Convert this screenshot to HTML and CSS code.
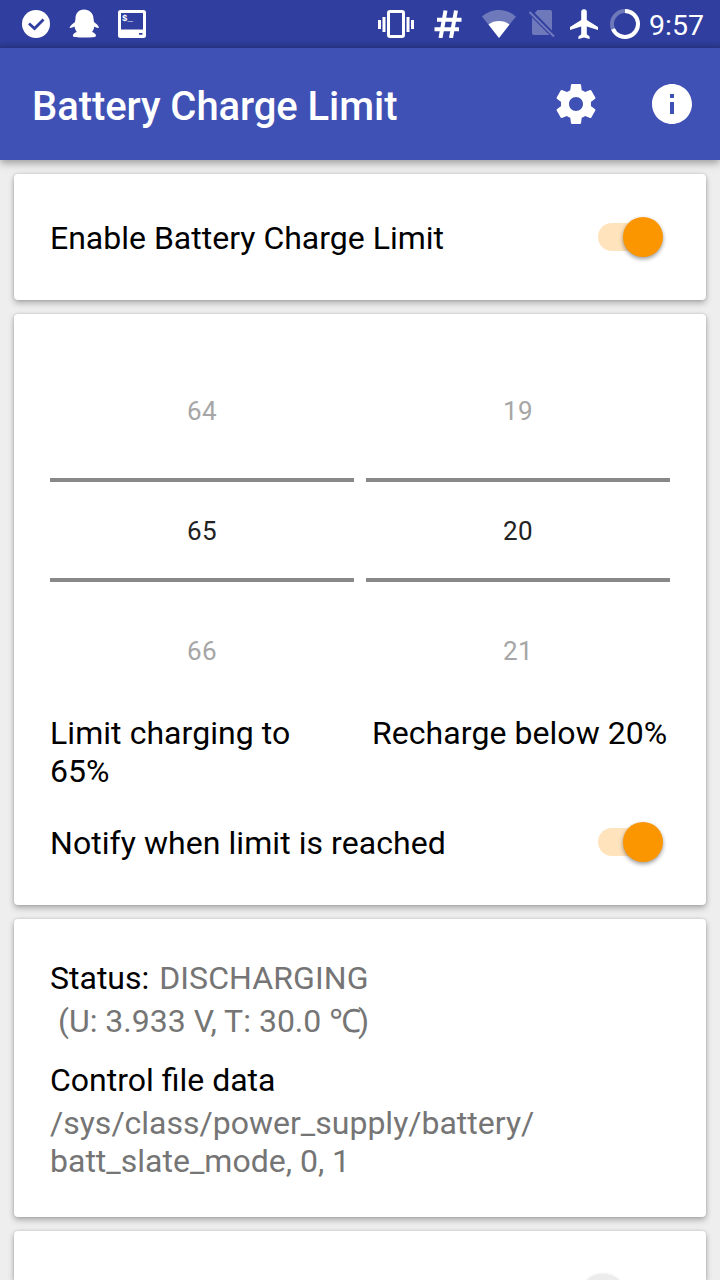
FILE: index.html
```html
<!DOCTYPE html>
<html lang="en">
<head>
  <meta charset="UTF-8">
  <meta name="viewport" content="width=device-width, initial-scale=1.0">
  <title>Battery Charge Limit</title>
  <link rel="stylesheet" href="styles.css">
</head>
<body>
  <div class="status-bar">
    <div class="notifications">
      <svg width="28" height="28" viewBox="0 0 28 28">
        <circle cx="14" cy="14" r="14" fill="#fff"/>
        <path d="M7 13.500l5.500 5 9-9" fill="none" stroke="#303f9f" stroke-width="2.800"/>
      </svg>
      <svg class="penguin" width="30" height="30" viewBox="0 0 30 30" fill="#fff">
        <path d="M15 .5C9.500.5 6.500 4.500 6.500 9.500L6 13C4 14.500 1.500 16.500 .5 18.500c.3 1 3 0 5-1 .3 2 1.200 4 2.300 5.500-2 .5-4 2-4 3.800C4 28.500 8 28.500 15.500 28.500s11.500 0 11.500-1.700c0-1.800-2-3.300-4-3.800 1.300-1.500 2-3.500 2.300-5.500 1.500 1 4 2 4.700 1-.5-2-3-4-5-5.500l-.5-3.500C24.500 4.500 20.500.5 15 .5z"/>
      </svg>
      <svg class="terminal" width="28" height="28" viewBox="0 0 28 28">
        <path fill="#fff" fill-rule="evenodd" d="M2.500 0h23A2.500 2.500 0 0 1 28 2.500v23a2.500 2.500 0 0 1-2.500 2.500h-23A2.500 2.500 0 0 1 0 25.500v-23A2.500 2.500 0 0 1 2.500 0zM3 3v16.500h22V3zM21 23v1.800h3.500V23z"/>
        <text class="prompt" x="4" y="11">$_</text>
      </svg>
    </div>
    <div class="indicators">
      <svg width="36" height="28" viewBox="0 0 36 28" fill="#fff">
        <path d="M0 10h3v9H0zM4.500 7h3v15h-3zM28.500 7h3v15h-3zM33 10h3v9h-3z"/>
        <rect x="10.500" y="1.500" width="15" height="25" rx="1.500" fill="none" stroke="#fff" stroke-width="3"/>
      </svg>
      <svg class="hash" width="28" height="28" viewBox="0 0 28 28">
        <path d="M11.500 0.500L6.500 28M22 0.500L17 28M3 9.800h24.500M0.500 19.300h24.500" fill="none" stroke="#fff" stroke-width="4"/>
      </svg>
      <svg class="wifi" width="36" height="28" viewBox="0 0 36 28" fill="#fff">
        <path opacity=".3" d="M18 28L1 6.500C5.500 2.500 11.500 0 18 0s12.500 2.500 17 6.500z"/>
        <path d="M18 28L7.500 14.500c3-2.400 6.500-3.500 10.500-3.500s7.500 1.100 10.500 3.500z"/>
      </svg>
      <svg class="sim" width="28" height="30" viewBox="0 0 28 30">
        <path fill="#fff" opacity=".3" d="M9.500 1H22a2 2 0 0 1 2 2v18.500L6.800 4zM4 8.500L21.500 26H6a2 2 0 0 1-2-2z"/>
        <path d="M1.500 3L26 27.500" stroke="#fff" stroke-width="2" opacity=".3"/>
      </svg>
      <svg class="plane" width="28" height="30" viewBox="0 0 28 30">
        <path fill="#fff" d="M28 21v-3L16.800 11V3a2.800 2.800 0 0 0-5.600 0v8L0 18v3l11.200-3.500v7.700L8.400 27.500V30l5.600-1.500 5.600 1.500v-2.500l-2.800-2.300v-7.700z"/>
      </svg>
      <svg class="ring" width="30" height="30" viewBox="0 0 30 30" fill="none" stroke="#fff" stroke-width="4">
        <circle cx="15" cy="15" r="13" opacity=".3"/>
        <path d="M15 2a13 13 0 1 1-12 18"/>
      </svg>
      <span class="clock">9:57</span>
    </div>
  </div>

  <header>
    <h1>Battery Charge Limit</h1>
    <nav>
      <svg width="48" height="48" viewBox="0 0 24 24" fill="#fff">
        <path d="M19.430 12.980c.04-.32.070-.64.070-.98s-.03-.66-.07-.98l2.110-1.650c.19-.15.240-.42.120-.64l-2-3.460c-.12-.22-.39-.3-.61-.22l-2.490 1c-.52-.4-1.080-.73-1.690-.98l-.38-2.650C14.460 2.180 14.250 2 14 2h-4c-.25 0-.46.180-.49.420l-.38 2.650c-.61.250-1.170.590-1.690.980l-2.490-1c-.23-.09-.49 0-.61.220l-2 3.460c-.13.220-.07.490.120.640l2.110 1.650c-.04.320-.07.650-.07.980s.03.660.070.980l-2.110 1.650c-.19.150-.24.420-.12.640l2 3.460c.12.220.390.300.610.220l2.490-1c.52.400 1.080.730 1.690.980l.38 2.650c.03.240.240.420.490.420h4c.25 0 .46-.18.490-.42l.38-2.650c.61-.25 1.170-.59 1.690-.98l2.490 1c.23.090.490 0 .61-.22l2-3.460c.12-.22.070-.49-.12-.64zM12 15.500c-1.930 0-3.500-1.570-3.500-3.500s1.570-3.500 3.500-3.500 3.500 1.570 3.500 3.500-1.570 3.500-3.500 3.500z"/>
      </svg>
      <svg width="48" height="48" viewBox="0 0 24 24" fill="#fff">
        <path d="M12 2C6.480 2 2 6.480 2 12s4.480 10 10 10 10-4.480 10-10S17.520 2 12 2zm1 15h-2v-6h2zm0-8h-2V7h2z"/>
      </svg>
    </nav>
  </header>

  <main>
    <section class="card enable-card">
      <div class="row">
        <span>Enable Battery Charge Limit</span>
        <span class="switch on"></span>
      </div>
    </section>

    <section class="card limits-card">
      <div class="pickers">
        <div class="picker">
          <span>64</span>
          <span class="selected">65</span>
          <span>66</span>
        </div>
        <div class="picker">
          <span>19</span>
          <span class="selected">20</span>
          <span>21</span>
        </div>
      </div>
      <div class="captions">
        <p>Limit charging to 65%</p>
        <p>Recharge below 20%</p>
      </div>
      <div class="row">
        <span>Notify when limit is reached</span>
        <span class="switch on"></span>
      </div>
    </section>

    <section class="card status-card">
      <p class="status">Status: <span class="value">DISCHARGING</span></p>
      <p class="value reading">&nbsp;(U: 3.933 V, T: 30.0 <span class="unit">℃</span>)</p>
      <p class="label">Control file data</p>
      <p class="value">/sys/class/power_supply/battery/<br>batt_slate_mode, 0, 1</p>
    </section>

    <section class="card next-card">
      <div class="row">
        <span class="switch"></span>
      </div>
    </section>
  </main>
</body>
</html>
```

FILE: styles.css
```css
* {
  box-sizing: border-box;
}

body {
  display: flex;
  flex-direction: column;
  font-family: Roboto, "Noto Sans", sans-serif;
  font-size: 32px;
  line-height: 38px;
  margin: 0;
  height: 100vh;
  overflow: hidden;
  color: #000;
  background-color: #eee;
}

h1, p {
  margin: 0;
}

svg {
  display: block;
  flex-shrink: 0;
}

.status-bar {
  display: flex;
  flex-shrink: 0;
  justify-content: space-between;
  height: 48px;
  padding: 0 16px 0 22px;
  color: #fff;
  background: linear-gradient(#303f9f 40px, #2a378b);
}

.notifications, .indicators {
  display: flex;
  align-items: center;
}

.penguin {
  margin-left: 19px;
}

.terminal {
  margin-left: 19px;
}

.prompt {
  font-family: "Liberation Mono", monospace;
  font-size: 9px;
  font-weight: bold;
  fill: #fff;
}

.hash {
  margin-left: 20px;
}

.wifi {
  margin-left: 19px;
}

.sim {
  margin-left: 11px;
}

.plane {
  margin-left: 14px;
}

.ring {
  margin-left: 12px;
}

.clock {
  margin-left: 9px;
  padding-top: 3px;
  font-size: 28.5px;
}

header {
  position: relative;
  display: flex;
  flex-shrink: 0;
  align-items: center;
  justify-content: space-between;
  height: 112px;
  padding: 0 24px 0 32px;
  color: #fff;
  background-color: #3f51b5;
  box-shadow: 0 3px 8px rgba(0, 0, 0, 0.35);
}

h1 {
  font-size: 40px;
  font-weight: 500;
  line-height: 48px;
  letter-spacing: -0.07px;
  padding-top: 6px;
}

nav {
  display: flex;
  gap: 48px;
}

main {
  display: flex;
  flex: 1;
  flex-direction: column;
  gap: 14px;
  min-height: 0;
  padding: 14px 14px 0;
  overflow: hidden;
}

.card {
  flex-shrink: 0;
  padding: 0 36px;
  background-color: #fff;
  border-radius: 4px;
  box-shadow: 0 3px 6px rgba(0, 0, 0, 0.28), 0 0 3px rgba(0, 0, 0, 0.15);
}

.row {
  display: flex;
  align-items: center;
  justify-content: space-between;
}

.enable-card {
  height: 126px;
  padding-top: 45px;
}

/* switch: pale track with a round thumb on one end */
.switch {
  display: flex;
  align-items: center;
  width: 58px;
  height: 28px;
  margin-left: auto;
  margin-right: 14px;
  margin-bottom: 2px;
  border-radius: 14px;
  background-color: #b9b9b9;
}

.switch::before {
  content: "";
  flex-shrink: 0;
  width: 40px;
  height: 40px;
  margin-left: -12px;
  border-radius: 50%;
  background-color: #ececec;
  box-shadow: 0 2px 4px rgba(0, 0, 0, 0.4);
}

.switch.on {
  background-color: #ffe3bc;
}

.switch.on::before {
  margin-left: 25px;
  background-color: #fb9500;
}

.limits-card {
  height: 591px;
  padding-top: 30px;
}

.pickers {
  display: grid;
  grid-template-columns: 1fr 1fr;
  gap: 12px;
}

.picker {
  display: flex;
  flex-direction: column;
  text-align: center;
  font-size: 26px;
  letter-spacing: 0.4px;
  color: #a6a6a6;
}

.picker span {
  height: 134px;
  line-height: 134px;
}

.picker .selected {
  height: 104px;
  line-height: 98px;
  color: #222;
  border-top: 4px solid #888;
  border-bottom: 4px solid #888;
}

.picker span:last-child {
  line-height: 138px;
}

.captions {
  display: grid;
  grid-template-columns: 1fr 298px;
  gap: 24px;
  height: 110px;
  margin-top: -2px;
  letter-spacing: 0.06px;
}

.limits-card .row {
  letter-spacing: 0.06px;
}

.status-card {
  height: 298px;
  padding-top: 40px;
}

.value {
  color: #757575;
}

.status .value {
  margin-left: 2px;
  letter-spacing: 0.1px;
}

.unit {
  letter-spacing: -3px;
}

.reading {
  margin-top: 5px;
}

.label {
  margin-top: 21px;
  margin-bottom: 5px;
}

.next-card {
  flex: 1;
  min-height: 0;
  padding-top: 49px;
  border-radius: 4px 4px 0 0;
}

.next-card .switch {
  margin-right: 17px;
}
```
